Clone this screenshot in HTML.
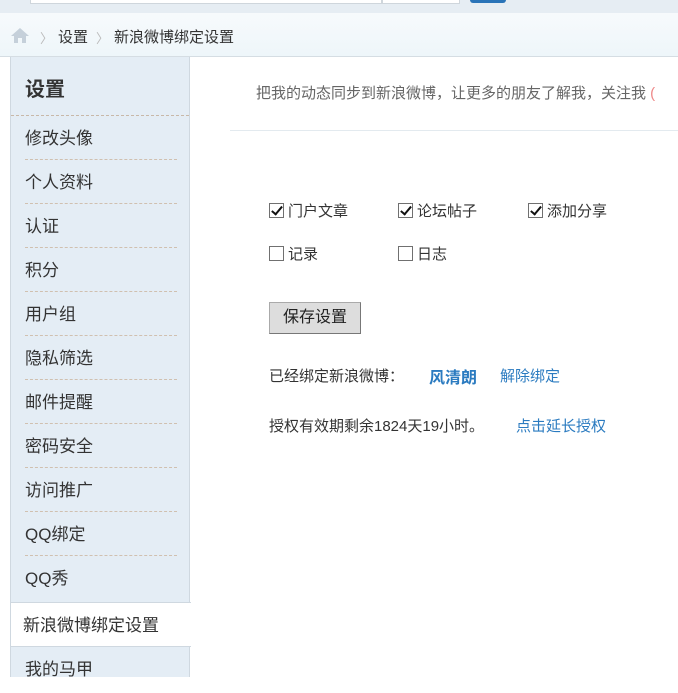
<!DOCTYPE html>
<html><head><meta charset="utf-8"><style>
*{margin:0;padding:0;box-sizing:border-box}
body{width:678px;height:669px;overflow:hidden;background:#fff;font-family:"Liberation Sans","Microsoft YaHei","Noto Sans CJK SC",sans-serif;position:relative;color:#333}
.top{position:absolute;left:0;top:0;width:678px;height:13px;background:#e6edf3}
.in1{position:absolute;left:30px;top:-2px;width:352px;height:6px;background:#fff;border:1px solid #cfd6dc;border-top:0}
.in2{position:absolute;left:382px;top:-2px;width:78px;height:6px;background:#fff;border:1px solid #cfd6dc;border-top:0}
.btn{position:absolute;left:470px;top:-4px;width:36px;height:7px;background:#2a74b8;border-radius:3px}
.bc{position:absolute;left:0;top:13px;width:678px;height:44px;background:linear-gradient(#f7fafc,#eef6fa);border-bottom:1px solid #d5dde3;font-size:15px;color:#333}
.bc span{position:absolute;top:13px}
.sep{color:#bbb;font-size:13px}
.side{position:absolute;left:10px;top:57px;width:180px;height:620px;background:#e4edf5;border-left:1px solid #cfd8e0;border-right:1px solid #cfd8e0}
.side h2{position:absolute;left:14px;top:16px;font-size:20px;font-weight:bold;color:#333}
.hl{position:absolute;left:0;top:58px;width:178px;border-top:1px dashed #c8b8a8}
.it{position:absolute;left:14px;width:152px;height:44px;font-size:17px;line-height:46px;color:#333;border-bottom:1px dashed #d0c0b0}
.act{position:absolute;left:0;top:545px;width:180px;height:45px;background:#fff;border-top:1px solid #cfd8e0;border-bottom:1px solid #cfd8e0;font-size:17px;line-height:45px;padding-left:12px}
.desc{position:absolute;left:256px;top:82px;font-size:15px;color:#666;white-space:nowrap}
.line{position:absolute;left:230px;top:130px;width:448px;border-top:1px solid #e3eaef}
.cb{position:absolute;font-size:15px;color:#333;white-space:nowrap}
.cb i{display:inline-block;width:15px;height:15px;border:1px solid #707070;background:#fff;vertical-align:-2px;margin-right:4px;position:relative;font-style:normal}
.cb i.c::after{content:"";position:absolute;left:4px;top:0px;width:4px;height:9px;border:solid #111;border-width:0 2.5px 2.5px 0;transform:rotate(40deg)}
.save{position:absolute;left:269px;top:302px;width:92px;height:32px;background:#ddd;border:1px solid #aaa;border-right-color:#777;border-bottom-color:#777;font-size:16px;line-height:29px;text-align:center;color:#222}
.t{position:absolute;font-size:15px;color:#333;white-space:nowrap}
.b{color:#2b7bc0}
</style></head><body>
<div class="top"><div class="in1"></div><div class="in2"></div><div class="btn"></div></div>
<div class="bc">
<svg style="position:absolute;left:10px;top:14px" width="20" height="17" viewBox="0 0 20 17"><path d="M10 1 L19 9 H16 V16 H12 V11 H8 V16 H4 V9 H1 Z" fill="#c5d0da"/></svg>
<span class="sep" style="left:40px;top:15px">〉</span><span style="left:58px">设置</span><span class="sep" style="left:96px;top:15px">〉</span><span style="left:114px">新浪微博绑定设置</span></div>
<div class="side"><h2>设置</h2><div class="hl"></div>
<div class="it" style="top:59px">修改头像</div>
<div class="it" style="top:103px">个人资料</div>
<div class="it" style="top:147px">认证</div>
<div class="it" style="top:191px">积分</div>
<div class="it" style="top:235px">用户组</div>
<div class="it" style="top:279px">隐私筛选</div>
<div class="it" style="top:323px">邮件提醒</div>
<div class="it" style="top:367px">密码安全</div>
<div class="it" style="top:411px">访问推广</div>
<div class="it" style="top:455px">QQ绑定</div>
<div class="it" style="top:499px;border-bottom:0">QQ秀</div>
<div class="act">新浪微博绑定设置</div>
<div class="it" style="top:590px;border:0">我的马甲</div>
</div>
<div class="desc">把我的动态同步到新浪微博，让更多的朋友了解我，关注我 <span style="color:#e88">(</span></div>
<div class="line"></div>
<div class="cb" style="left:269px;top:200px"><i class="c"></i>门户文章</div>
<div class="cb" style="left:398px;top:200px"><i class="c"></i>论坛帖子</div>
<div class="cb" style="left:528px;top:200px"><i class="c"></i>添加分享</div>
<div class="cb" style="left:269px;top:243px"><i></i>记录</div>
<div class="cb" style="left:398px;top:243px"><i></i>日志</div>
<div class="save">保存设置</div>
<div class="t" style="left:269px;top:365px">已经绑定新浪微博：</div>
<div class="t b" style="left:429px;top:364px;font-weight:bold;font-size:16px">风清朗</div>
<div class="t b" style="left:500px;top:365px">解除绑定</div>
<div class="t" style="left:269px;top:415px">授权有效期剩余1824天19小时。</div>
<div class="t b" style="left:516px;top:415px">点击延长授权</div>
</body></html>
